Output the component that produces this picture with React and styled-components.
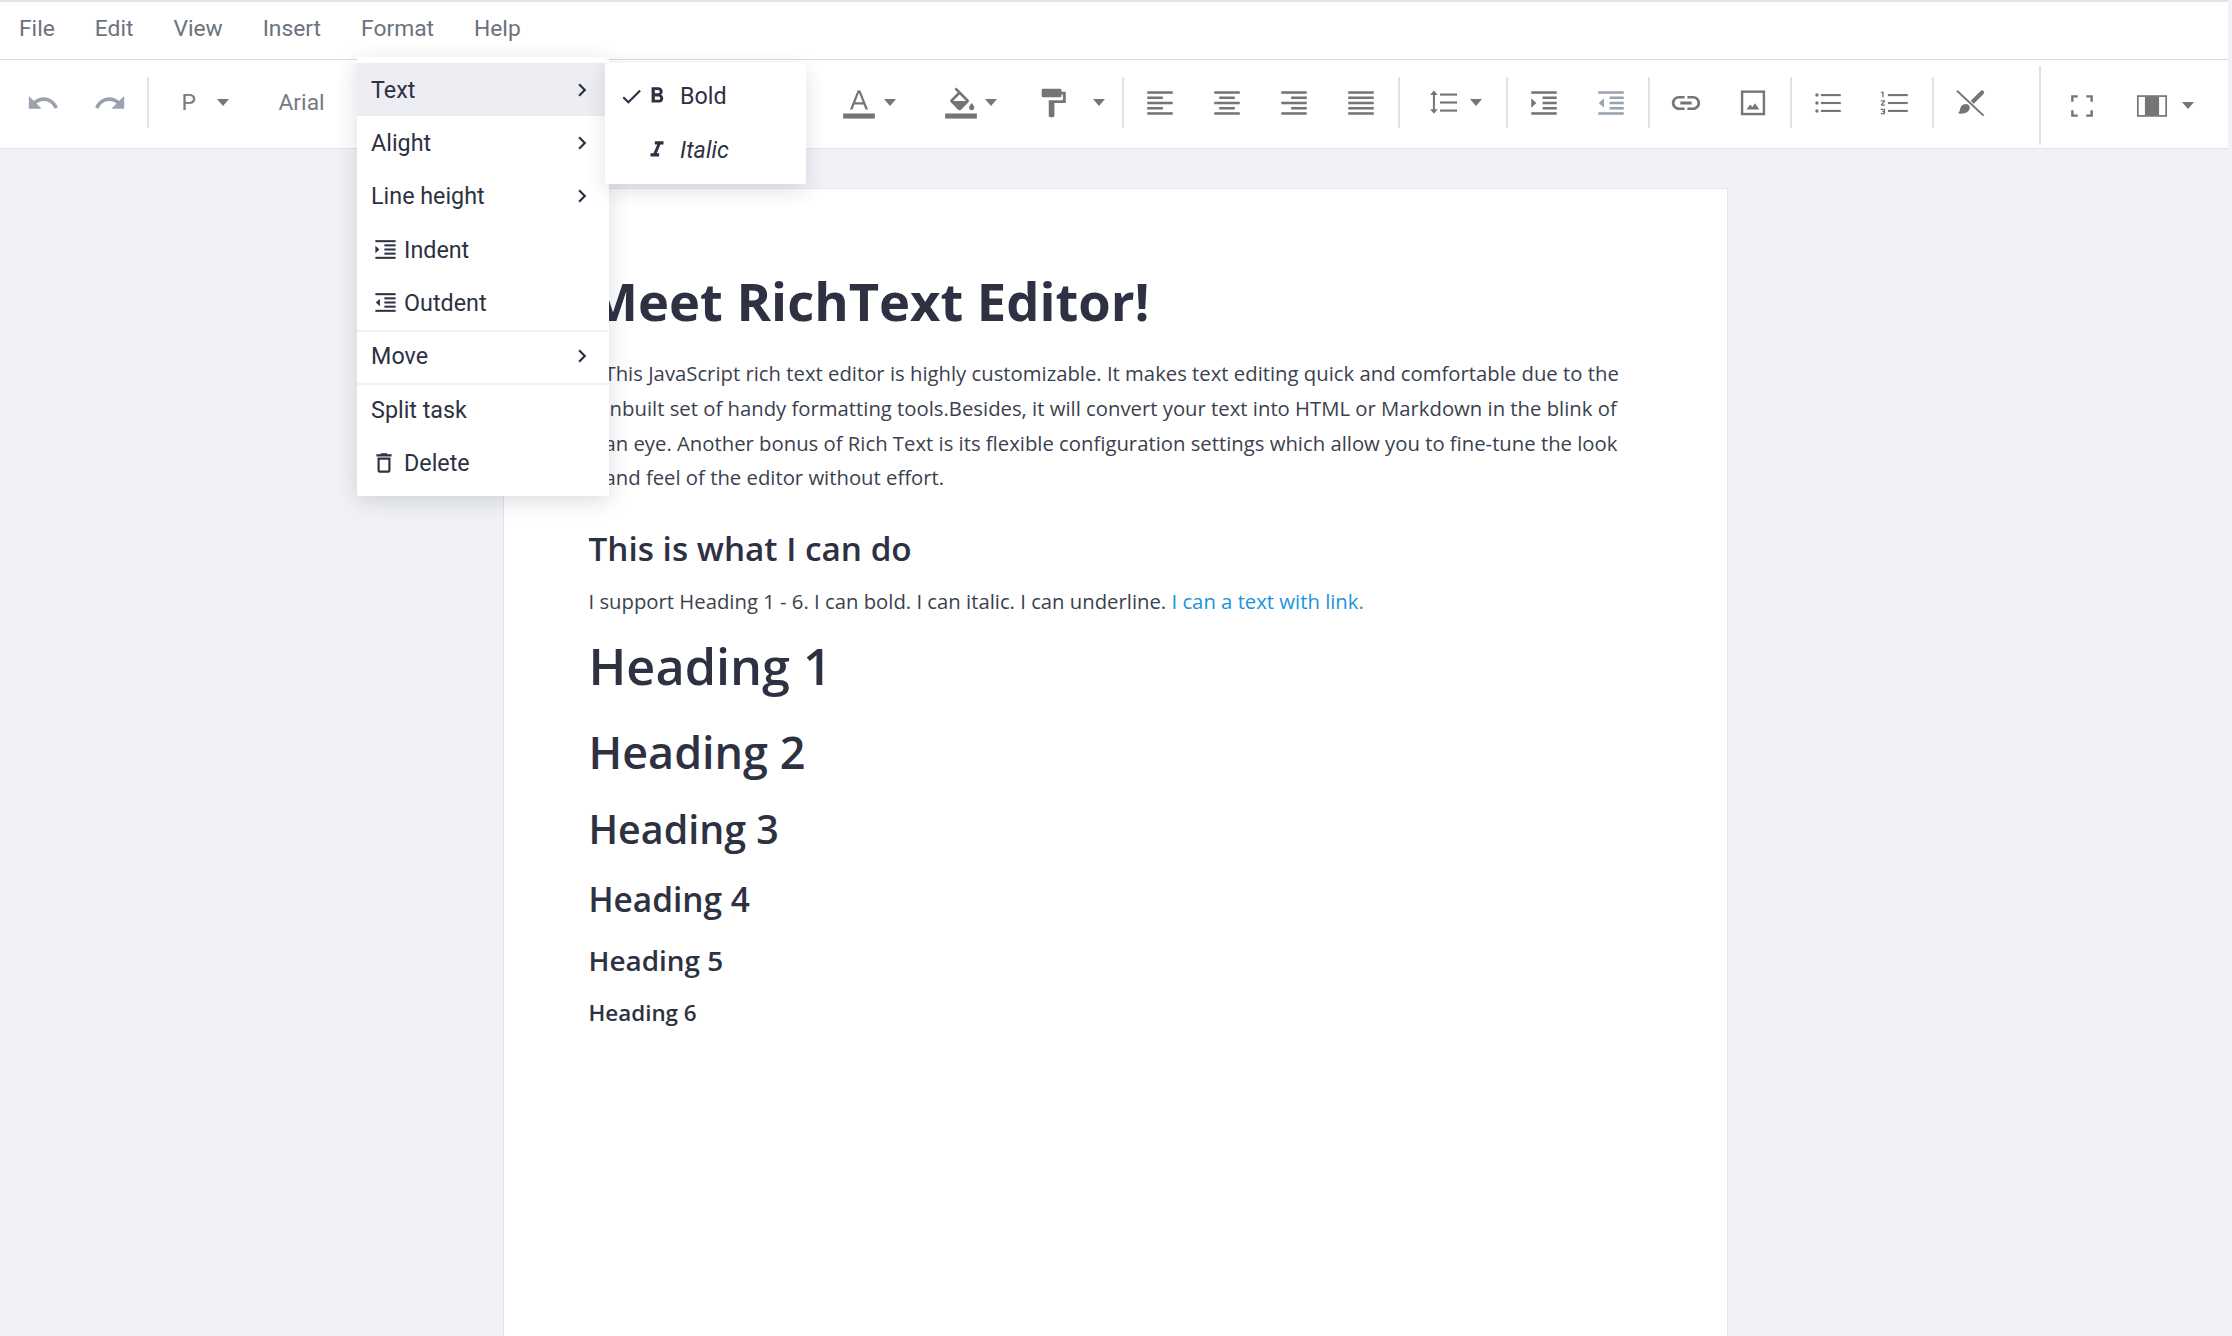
import React from 'react'
import styled, { createGlobalStyle } from 'styled-components'
import {
  MdUndo, MdRedo, MdFormatPaint, MdLink,
  MdFormatBold, MdFormatItalic, MdDeleteOutline, MdCheck, MdChevronRight,
} from 'react-icons/md'

const GlobalStyle = createGlobalStyle`
  html, body { margin: 0; padding: 0; height: 100%; }
  body { background: #f1f2f6; font-family: "Roboto", "Liberation Sans", sans-serif; }
`

const Page = styled.div`
  width: 2232px;
  height: 1336px;
  overflow: hidden;
  display: flex;
  flex-direction: column;
  background: #f1f2f6;
`

const MenuBar = styled.div`
  height: 57px;
  flex: none;
  margin-right: 4px;
  display: flex;
  align-items: stretch;
  background: #fff;
  border-top: 2px solid #e3e5ea;
  border-bottom: 1px solid #dcdddf;
  position: relative;
  z-index: 5;
`

const MenuItem = styled.div`
  position: relative;
  padding: 0 20px 4px;
  font-size: 22.8px;
  color: #6c727e;
  display: flex;
  align-items: center;
  &:first-child { padding-left: 19px; }
`

const Dropdown = styled.div`
  position: absolute;
  left: 16px;
  top: 55px;
  width: 252px;
  padding: 6px 0;
  box-sizing: border-box;
  background: #fff;
  border-radius: 3px;
  box-shadow: 0 5px 22px rgba(40, 45, 70, 0.16);
  color: #2d3142;
`

const DropRow = styled.div`
  position: relative;
  height: 53.33px;
  box-sizing: border-box;
  display: flex;
  align-items: center;
  padding-left: 14px;
  font-size: 23.3px;
  background: ${({ $active }) => ($active ? '#edeef3' : 'transparent')};
  box-shadow: ${({ $divided }) => ($divided ? 'inset 0 2px 0 #eef0f4' : 'none')};
`

const RowIcon = styled.span`
  width: 33px;
  flex: none;
  display: flex;
  align-items: center;
  justify-content: ${({ $center }) => ($center ? 'center' : 'flex-start')};
  padding: ${({ $center }) => ($center ? '0 7px 0 0' : '0 0 0 1px')};
  box-sizing: border-box;
  svg { display: block; }
`

const Chevron = styled(MdChevronRight)`
  position: absolute;
  right: 14px;
  top: 50%;
  margin-top: -13px;
`

const SubMenu = styled.div`
  position: absolute;
  left: 248px;
  top: 0;
  width: 201px;
  height: 121px;
  padding-top: 6px;
  box-sizing: border-box;
  background: #fff;
  border-radius: 3px;
  box-shadow: 0 6px 20px rgba(40, 45, 70, 0.14);
  z-index: 2;
`

const SubRow = styled.div`
  height: 54px;
  display: flex;
  align-items: center;
  padding-left: 14px;
  font-size: 23.3px;
  font-style: ${({ $italic }) => ($italic ? 'italic' : 'normal')};
`

const CheckSlot = styled.span`
  width: 25px;
  flex: none;
  display: flex;
  svg { display: block; }
`

const SubIcon = styled.span`
  width: 36px;
  flex: none;
  display: flex;
  svg { display: block; }
`

const Toolbar = styled.div`
  height: 88px;
  flex: none;
  margin-right: 4px;
  display: flex;
  align-items: center;
  padding-left: 9.5px;
  background: #fff;
  border-bottom: 1.5px solid #e1e2e5;
  color: #757575;
  svg { display: block; }
`

const ToolRow = styled.div`
  display: flex;
  align-items: center;
  height: 88px;
  padding-bottom: 3px;
  box-sizing: border-box;
`

const Sep = styled.div`
  width: 2px;
  height: ${({ $tall }) => ($tall ? '79px' : '51px')};
  margin: ${({ $tall }) => ($tall ? '6px 8px 0 35px' : '0 3px')};
  background: #e2e3e5;
  flex: none;
`

const ToolBtn = styled.div`
  width: 67px;
  height: 51px;
  flex: none;
  display: flex;
  align-items: center;
  justify-content: center;
  margin-top: ${({ $low }) => ($low ? '6px' : '0')};
  color: ${({ $muted }) => ($muted ? '#99a3b0' : '#757575')};
`

const DropBtn = styled.div`
  width: ${({ $w }) => $w}px;
  height: 51px;
  flex: none;
  display: flex;
  align-items: center;
  padding-left: ${({ $pad }) => $pad || 19}px;
  box-sizing: border-box;
  margin-top: ${({ $low }) => ($low ? '6px' : '0')};
`

const SelectBtn = styled.div`
  width: ${({ $w }) => $w}px;
  height: 51px;
  flex: none;
  display: flex;
  align-items: center;
  padding-left: ${({ $pad }) => $pad}px;
  box-sizing: border-box;
  font-size: 22.8px;
  color: #757b85;
`

const Caret = styled.span`
  width: 0;
  height: 0;
  flex: none;
  margin-left: ${({ $gap }) => $gap}px;
  margin-top: -1px;
  border-left: 6.5px solid transparent;
  border-right: 6.5px solid transparent;
  border-top: 7px solid #757575;
`

const Main = styled.main`
  flex: 1;
  min-height: 0;
  padding: 39px 2px 0 0;
  display: flex;
  justify-content: center;
`

const Doc = styled.article`
  width: 1225px;
  box-sizing: border-box;
  padding: 81.6px 85px 0;
  background: #fff;
  border: 1px solid #e4e5ea;
  border-bottom: none;
  font-family: "Open Sans", "Liberation Sans", sans-serif;
  color: #2d3142;
`

const Title = styled.h1`
  margin: 0;
  font-size: 52.5px;
  line-height: 60px;
  font-weight: 700;
`

const Lead = styled.p`
  margin: 25.4px 0 0;
  padding-left: 16px;
  font-size: 20.3px;
  line-height: 34.8px;
  color: #3b3f4e;
`

const Sub = styled.h2`
  margin: 31.3px 0 0;
  font-size: 33.3px;
  line-height: 44px;
  font-weight: 600;
`

const Body = styled.p`
  margin: 13.4px 0 0;
  font-size: 20.3px;
  line-height: 34.8px;
  color: #3b3f4e;
`

const DocLink = styled.a`
  color: #1a93dc;
  text-decoration: none;
`

const Heading = styled.div`
  margin-top: ${({ $mt }) => $mt}px;
  font-size: ${({ $size }) => $size}px;
  line-height: ${({ $lh }) => $lh}px;
  font-weight: 600;
`

// five stacked bars, each [x, width] in a 24 box
const Bars = ({ rows, size = 34, extra }) => (
  <svg width={size} height={size} viewBox="0 0 24 24" fill="currentColor">
    {rows.map(([x, w], i) => (
      <rect key={i} x={x} y={3.7 + i * 3.7} width={w} height="1.8" />
    ))}
    {extra}
  </svg>
)

const AlignLeft = () => <Bars rows={[[3, 18], [3, 11], [3, 18], [3, 11], [3, 18]]} />
const AlignCenter = () => <Bars rows={[[3, 18], [6.5, 11], [3, 18], [6.5, 11], [3, 18]]} />
const AlignRight = () => <Bars rows={[[3, 18], [10, 11], [3, 18], [10, 11], [3, 18]]} />
const AlignJustify = () => <Bars rows={[[3, 18], [3, 18], [3, 18], [3, 18], [3, 18]]} />
const indentRows = [[3, 18], [11, 10], [11, 10], [11, 10], [3, 18]]
const IndentIcon = ({ size }) => <Bars size={size} rows={indentRows} extra={<path d="M3 8.6v6.8L6.6 12z" />} />
const OutdentIcon = ({ size }) => <Bars size={size} rows={indentRows} extra={<path d="M7 8.6v6.8L3.4 12z" />} />

const TextColorIcon = () => (
  <svg width="34" height="34" viewBox="0 0 24 24" fill="currentColor">
    <path d="M5.6 16.6 11 3.2h2l5.4 13.4h-1.8L15.2 13H8.8l-1.4 3.6zM9.4 11.4h5.2L12 4.8z" />
    <rect x="0.8" y="19.4" width="22.4" height="3.6" />
  </svg>
)

const FillColorIcon = () => (
  <svg width="34" height="34" viewBox="0 0 24 24" fill="currentColor">
    <path transform="translate(1.5 1) scale(0.95)" d="M16.56 8.94 7.62 0 6.21 1.41l2.38 2.38-5.15 5.15c-.59.59-.59 1.54 0 2.12l5.5 5.5c.29.29.68.44 1.06.44s.77-.15 1.06-.44l5.5-5.5c.59-.58.59-1.53 0-2.12zM5.21 10 10 5.21 14.79 10H5.21zM19 11.5s-2 2.17-2 3.5c0 1.1.9 2 2 2s2-.9 2-2c0-1.33-2-3.5-2-3.5z" />
    <rect x="0.8" y="19.4" width="22.4" height="3.6" />
  </svg>
)

const LineHeightIcon = () => (
  <svg width="34" height="34" viewBox="0 0 24 24" fill="currentColor">
    <path d="M6.3 3.2 9 6.4H3.6zM6.3 19.6 9 16.4H3.6z" />
    <rect x="5.6" y="5" width="1.4" height="12.8" />
    {[5.3, 10.9, 16.6].map(y => (
      <rect key={y} x="10.6" y={y} width="12" height="1.5" />
    ))}
  </svg>
)

const ImageIcon = () => (
  <svg width="34" height="34" viewBox="0 0 24 24" fill="none" stroke="currentColor">
    <rect x="4.3" y="4" width="15.4" height="15.8" strokeWidth="1.7" />
    <path d="M7.5 16.5 10 13l1.6 1.8 1.8-2.6 3.1 4.3z" fill="currentColor" stroke="none" />
  </svg>
)

const BulletIcon = () => (
  <svg width="34" height="34" viewBox="0 0 24 24" fill="currentColor">
    {[6.4, 12, 17.6].map(y => (
      <g key={y}>
        <circle cx="4.2" cy={y} r="1.2" />
        <rect x="7" y={y - 0.75} width="14" height="1.5" />
      </g>
    ))}
  </svg>
)

const NumberedIcon = () => (
  <svg width="34" height="34" viewBox="0 0 24 24" fill="currentColor">
    <path d="M2 17h2v.5H3v1h1v.5H2v1h3v-4H2v1zm1-9h1V4H2v1h1v3zm-1 3h1.8L2 13.1v.9h3v-1H3.2L5 10.9V10H2v1z" />
    {[6.4, 12, 17.6].map(y => (
      <rect key={y} x="7" y={y - 0.75} width="14" height="1.5" />
    ))}
  </svg>
)

const ClearIcon = () => (
  <svg width="34" height="34" viewBox="0 0 24 24" fill="currentColor">
    <path d="M3.5 19.2c1.6-.7 1-3 2.4-5 1.4-1.6 3.8-2 5.2-.8 1.2 1.2.9 3-.2 4.2-1.7 1.8-5 2.4-7.4 1.6z" />
    <path d="M20.5 4.6 12.9 12.1" stroke="currentColor" strokeWidth="3" strokeLinecap="round" fill="none" />
    <path d="M2.8 3.4 21.6 20.9" stroke="#fff" strokeWidth="2.8" fill="none" />
    <path d="M2.8 3.4 21.6 20.9" stroke="currentColor" strokeWidth="1.4" fill="none" />
  </svg>
)

const FullscreenIcon = () => (
  <svg width="34" height="34" viewBox="0 0 24 24" fill="none" stroke="currentColor" strokeWidth="1.7">
    <path d="M5.2 9V5.2H9M15 5.2h3.8V9M18.8 15v3.8H15M9 18.8H5.2V15" />
  </svg>
)

const LayoutIcon = () => (
  <svg width="34" height="34" viewBox="0 0 24 24" fill="currentColor">
    <rect x="2" y="5" width="20" height="14" fill="none" stroke="currentColor" strokeWidth="1.2" />
    <rect x="7" y="5.5" width="10" height="13" />
  </svg>
)

const App = () => {
  return (
    <Page>
      <GlobalStyle />
      <MenuBar>
        <MenuItem>File</MenuItem>
        <MenuItem>Edit</MenuItem>
        <MenuItem>View</MenuItem>
        <MenuItem>Insert</MenuItem>
        <MenuItem>
          Format
          <Dropdown>
            <DropRow $active>
              Text
              <Chevron size={26} />
              <SubMenu>
                <SubRow>
                  <CheckSlot><MdCheck size={25} /></CheckSlot>
                  <SubIcon><MdFormatBold size={26} /></SubIcon>
                  Bold
                </SubRow>
                <SubRow $italic>
                  <CheckSlot />
                  <SubIcon><MdFormatItalic size={26} /></SubIcon>
                  Italic
                </SubRow>
              </SubMenu>
            </DropRow>
            <DropRow>Alight<Chevron size={26} /></DropRow>
            <DropRow>Line height<Chevron size={26} /></DropRow>
            <DropRow><RowIcon><IndentIcon size={27} /></RowIcon>Indent</DropRow>
            <DropRow><RowIcon><OutdentIcon size={27} /></RowIcon>Outdent</DropRow>
            <DropRow $divided>Move<Chevron size={26} /></DropRow>
            <DropRow $divided>Split task</DropRow>
            <DropRow><RowIcon $center><MdDeleteOutline size={28} /></RowIcon>Delete</DropRow>
          </Dropdown>
        </MenuItem>
        <MenuItem>Help</MenuItem>
      </MenuBar>

      <Toolbar>
        <ToolRow>
          <ToolBtn $muted><MdUndo size={34} /></ToolBtn>
          <ToolBtn $muted><MdRedo size={34} /></ToolBtn>
          <Sep />
          <SelectBtn $w={127} $pad={30}>P<Caret $gap={21} /></SelectBtn>
          <SelectBtn $w={544} $pad={0}>Arial</SelectBtn>
          <DropBtn $w={102}><TextColorIcon /><Caret $gap={8} /></DropBtn>
          <DropBtn $w={92}><FillColorIcon /><Caret $gap={7} /></DropBtn>
          <DropBtn $w={102}><MdFormatPaint size={34} /><Caret $gap={23} /></DropBtn>
          <Sep />
          <ToolBtn><AlignLeft /></ToolBtn>
          <ToolBtn><AlignCenter /></ToolBtn>
          <ToolBtn><AlignRight /></ToolBtn>
          <ToolBtn><AlignJustify /></ToolBtn>
          <Sep />
          <DropBtn $w={100} $pad={22}><LineHeightIcon /><Caret $gap={11.5} /></DropBtn>
          <Sep />
          <ToolBtn><IndentIcon /></ToolBtn>
          <ToolBtn $muted><OutdentIcon /></ToolBtn>
          <Sep />
          <ToolBtn><MdLink size={34} /></ToolBtn>
          <ToolBtn><ImageIcon /></ToolBtn>
          <Sep />
          <ToolBtn><BulletIcon /></ToolBtn>
          <ToolBtn><NumberedIcon /></ToolBtn>
          <Sep />
          <ToolBtn><ClearIcon /></ToolBtn>
          <Sep $tall />
          <ToolBtn $low><FullscreenIcon /></ToolBtn>
          <DropBtn $low $w={110}><LayoutIcon /><Caret $gap={13} /></DropBtn>
        </ToolRow>
      </Toolbar>

      <Main>
        <Doc>
          <Title>Meet RichText Editor!</Title>
          <Lead>
            This JavaScript rich text editor is highly customizable. It makes text editing quick and comfortable due to the inbuilt set of handy formatting tools.Besides, it will convert your text into HTML or Markdown in the blink of an eye. Another bonus of Rich Text is its flexible configuration settings which allow you to fine-tune the look and feel of the editor without effort.
          </Lead>
          <Sub>This is what I can do</Sub>
          <Body>
            I support Heading 1 - 6. I can bold. I can italic. I can underline.{' '}
            <DocLink href="#">I can a text with link.</DocLink>
          </Body>
          <Heading $size={50.4} $lh={60} $mt={17.2}>Heading 1</Heading>
          <Heading $size={44.9} $lh={54} $mt={29}>Heading 2</Heading>
          <Heading $size={39.4} $lh={48} $mt={26}>Heading 3</Heading>
          <Heading $size={33.4} $lh={42} $mt={25}>Heading 4</Heading>
          <Heading $size={27.9} $lh={36} $mt={22}>Heading 5</Heading>
          <Heading $size={22.4} $lh={30} $mt={20}>Heading 6</Heading>
        </Doc>
      </Main>
    </Page>
  )
}

export default App
